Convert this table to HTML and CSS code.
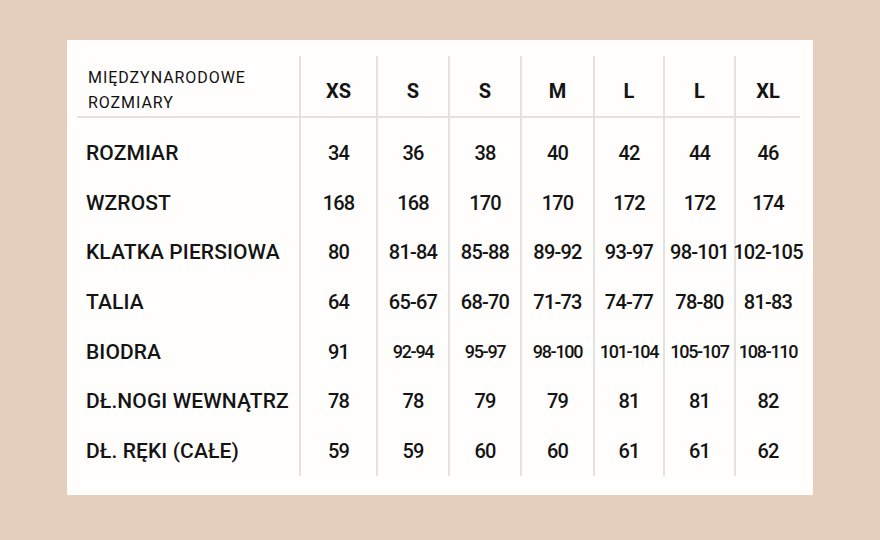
FILE: index.html
```html
<!DOCTYPE html>
<html lang="pl">
<head>
<meta charset="utf-8">
<title>Tabela rozmiarów</title>
<link rel="stylesheet" href="styles.css">
</head>
<body>
<div class="card">
  <div class="chart">
    <div class="cell head label-head">MIĘDZYNARODOWE<br>ROZMIARY</div>
    <div class="cell head size">XS</div>
    <div class="cell head size">S</div>
    <div class="cell head size">S</div>
    <div class="cell head size">M</div>
    <div class="cell head size">L</div>
    <div class="cell head size">L</div>
    <div class="cell head size">XL</div>

    <div class="cell label first">ROZMIAR</div>
    <div class="cell num first">34</div>
    <div class="cell num first">36</div>
    <div class="cell num first">38</div>
    <div class="cell num first">40</div>
    <div class="cell num first">42</div>
    <div class="cell num first">44</div>
    <div class="cell num first">46</div>

    <div class="cell label">WZROST</div>
    <div class="cell num">168</div>
    <div class="cell num">168</div>
    <div class="cell num">170</div>
    <div class="cell num">170</div>
    <div class="cell num">172</div>
    <div class="cell num">172</div>
    <div class="cell num">174</div>

    <div class="cell label">KLATKA PIERSIOWA</div>
    <div class="cell num">80</div>
    <div class="cell num">81-84</div>
    <div class="cell num">85-88</div>
    <div class="cell num">89-92</div>
    <div class="cell num">93-97</div>
    <div class="cell num">98-101</div>
    <div class="cell num">102-105</div>

    <div class="cell label">TALIA</div>
    <div class="cell num">64</div>
    <div class="cell num">65-67</div>
    <div class="cell num">68-70</div>
    <div class="cell num">71-73</div>
    <div class="cell num">74-77</div>
    <div class="cell num">78-80</div>
    <div class="cell num">81-83</div>

    <div class="cell label">BIODRA</div>
    <div class="cell num">91</div>
    <div class="cell num small">92-94</div>
    <div class="cell num small">95-97</div>
    <div class="cell num small">98-100</div>
    <div class="cell num small">101-104</div>
    <div class="cell num small">105-107</div>
    <div class="cell num small">108-110</div>

    <div class="cell label">DŁ.NOGI WEWNĄTRZ</div>
    <div class="cell num">78</div>
    <div class="cell num">78</div>
    <div class="cell num">79</div>
    <div class="cell num">79</div>
    <div class="cell num">81</div>
    <div class="cell num">81</div>
    <div class="cell num">82</div>

    <div class="cell label">DŁ. RĘKI (CAŁE)</div>
    <div class="cell num">59</div>
    <div class="cell num">59</div>
    <div class="cell num">60</div>
    <div class="cell num">60</div>
    <div class="cell num">61</div>
    <div class="cell num">61</div>
    <div class="cell num">62</div>
  </div>
</div>
</body>
</html>
```

FILE: styles.css
```css
* { box-sizing: border-box; }

html, body {
  margin: 0;
  padding: 0;
}

body {
  width: 880px;
  height: 540px;
  background: #e4cfbf;
  padding: 40px 0 0 67px;
  font-family: Roboto, "Liberation Sans", sans-serif;
  color: #141414;
}

.card {
  width: 746px;
  height: 455px;
  background: #fffefc;
  padding: 16px 13px 0 10px;
}

.chart {
  display: grid;
  grid-template-columns: 222px 77px 72px 72px 73px 70px 71px 66px;
  grid-template-rows: 62px 59.7px repeat(6, 49.7px);
}

.cell {
  display: flex;
  align-items: center;
  justify-content: center;
  border-left: 2px solid #e2e2e2;
  white-space: nowrap;
}

.cell.label,
.cell.label-head {
  border-left: none;
  justify-content: flex-start;
}

.head {
  border-bottom: 2px solid #e2e2e2;
  padding-top: 9px;
}

.label-head {
  padding-left: 11px;
  padding-top: 8px;
  font-size: 16px;
  font-weight: 400;
  letter-spacing: 0.95px;
  line-height: 25px;
  color: #111;
}

.size {
  font-size: 20px;
  font-weight: 700;
}

.label {
  padding-left: 9px;
  font-size: 21px;
  font-weight: 500;
  letter-spacing: 0.1px;
}

.num {
  font-size: 20px;
  font-weight: 500;
  letter-spacing: -0.8px;
}

.num.small {
  font-size: 18px;
  letter-spacing: -1.3px;
}

.first {
  padding-top: 10px;
}
```
